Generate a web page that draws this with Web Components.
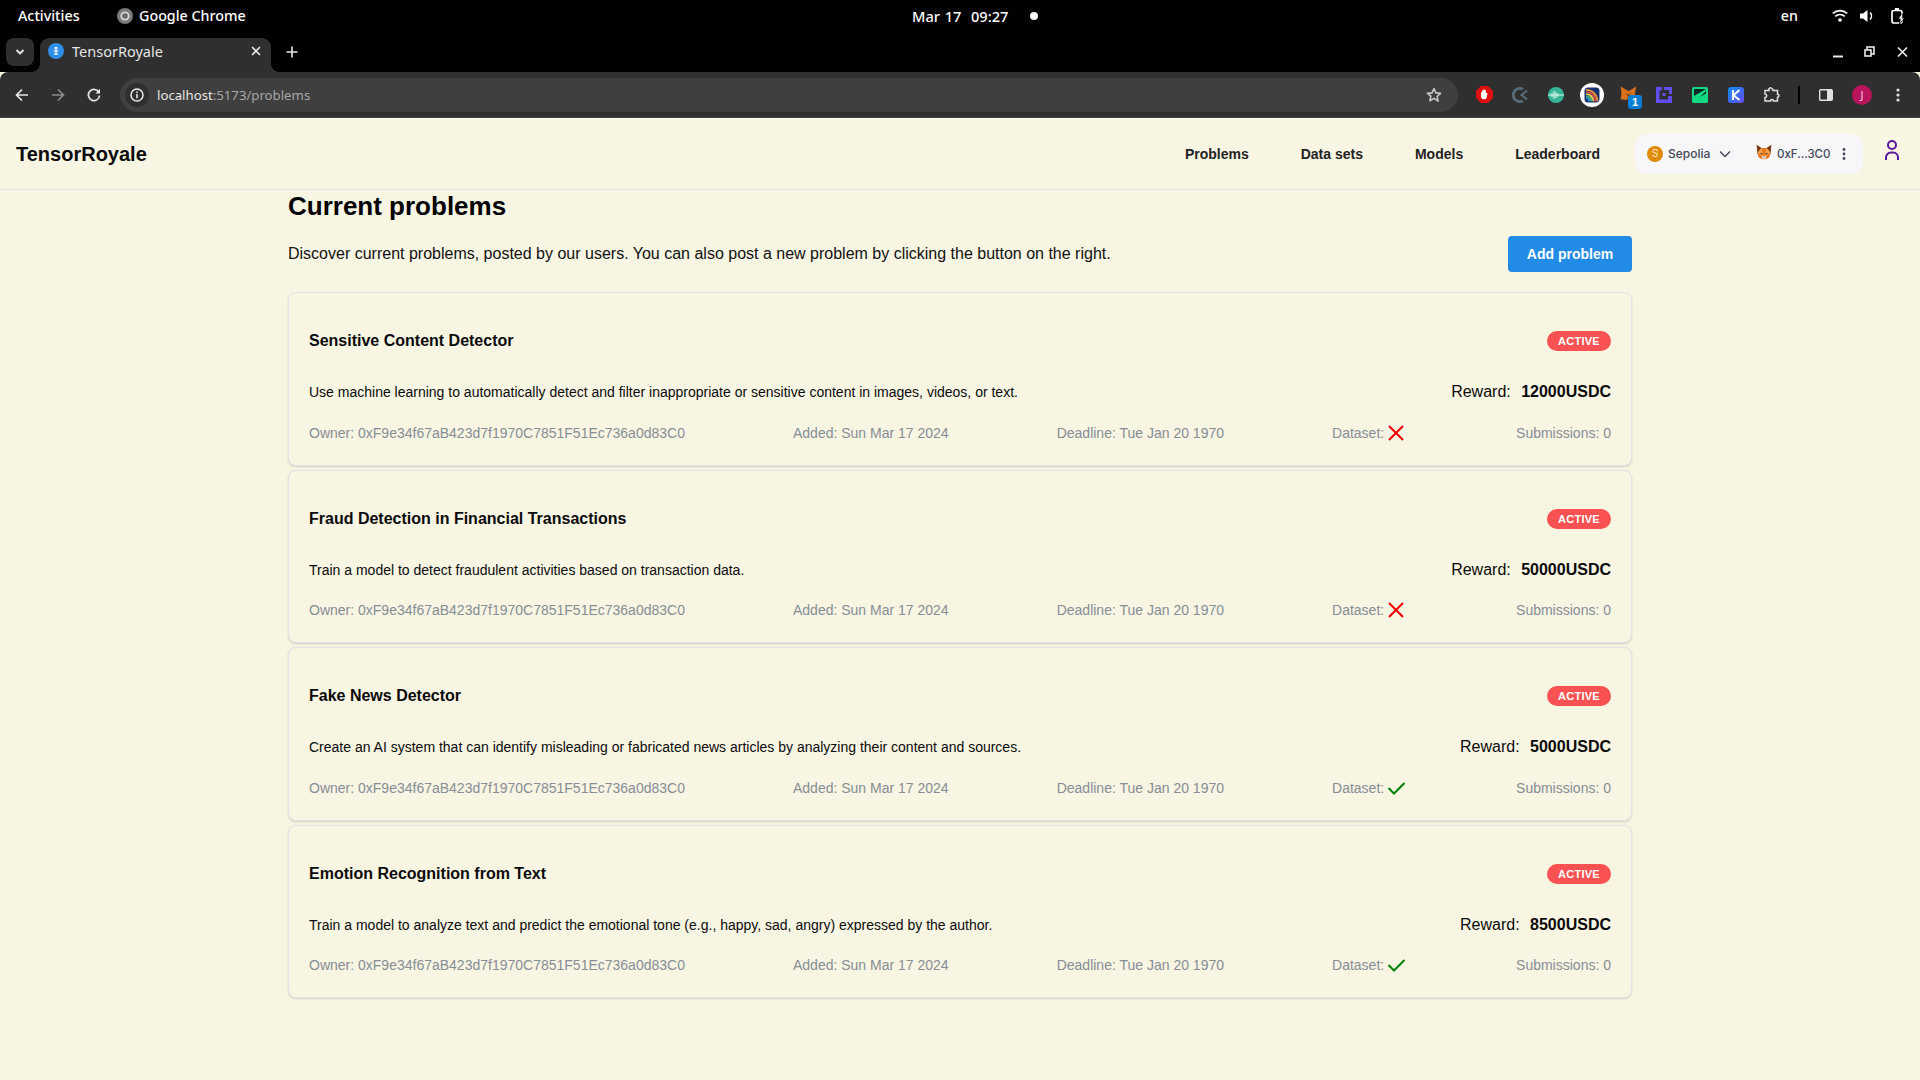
<!DOCTYPE html>
<html lang="en"><head><meta charset="utf-8"><title>TensorRoyale</title>
<style>
html,body{margin:0;padding:0;height:100%;overflow:hidden;background:#f8f5e3;font-family:"Liberation Sans",Arial,sans-serif}
browser-shell{height:100vh}
</style></head><body>
<browser-shell>
  <os-top-bar></os-top-bar>
  <browser-tabs></browser-tabs>
  <browser-toolbar></browser-toolbar>
  <app-header></app-header>
  <problems-page>
    <problem-card dataset="no" reward="12000USDC">
      <span slot="title">Sensitive Content Detector</span>
      <span slot="desc">Use machine learning to automatically detect and filter inappropriate or sensitive content in images, videos, or text.</span>
    </problem-card>
    <problem-card dataset="no" reward="50000USDC">
      <span slot="title">Fraud Detection in Financial Transactions</span>
      <span slot="desc">Train a model to detect fraudulent activities based on transaction data.</span>
    </problem-card>
    <problem-card dataset="yes" reward="5000USDC">
      <span slot="title">Fake News Detector</span>
      <span slot="desc">Create an AI system that can identify misleading or fabricated news articles by analyzing their content and sources.</span>
    </problem-card>
    <problem-card dataset="yes" reward="8500USDC">
      <span slot="title">Emotion Recognition from Text</span>
      <span slot="desc">Train a model to analyze text and predict the emotional tone (e.g., happy, sad, angry) expressed by the author.</span>
    </problem-card>
  </problems-page>
</browser-shell>
<script>
function def(name, html){
  customElements.define(name, class extends HTMLElement{
    connectedCallback(){
      if(this.shadowRoot) return;
      const r=this.attachShadow({mode:'open'});
      r.innerHTML = typeof html==='function'? html(this): html;
    }
  });
}
const FOX=`<svg width="16" height="16" viewBox="0 0 24 24"><path fill="#763d16" d="M1 1l9 6-2 5-6 3zM23 1l-9 6 2 5 6 3z"/><path fill="#e2761b" d="M2 13l6-7h8l6 7-2 7-5 3H9l-5-3z"/><path fill="#f6a04d" d="M2 13l6-7 2 6-3 4zM22 13l-6-7-2 6 3 4z"/><path fill="#efe0d0" d="M8 17l4 1 4-1-2 6h-4z"/><path fill="#233447" d="M6.500 13l3 1-2 1.500zM17.500 13l-3 1 2 1.500zM10.500 19h3l-1.500 1.500z"/></svg>`;

def('browser-shell',`<style>:host{display:flex;flex-direction:column;height:100vh;overflow:hidden}</style><slot></slot>`);

def('os-top-bar',`<style>
:host{display:flex;align-items:center;height:36px;flex:none;background:#000;color:#fff;font:500 14.300px "Noto Sans","Open Sans",sans-serif;position:relative;padding:0 15px 5px 18px;box-sizing:border-box}
.act{width:99px}
.app{display:flex;align-items:center;gap:6px}
.clock{position:absolute;left:912px;top:0;height:31px;display:flex;align-items:center;white-space:pre;font-size:14.600px;word-spacing:1px}
.dot{position:absolute;left:1029.500px;top:12px;width:8px;height:8px;border-radius:50%;background:#fff}
.right{margin-left:auto;display:flex;align-items:center}
.en{margin-right:34px}
svg{display:block}
</style>
<span class="act">Activities</span>
<span class="app"><svg width="16" height="16" viewBox="0 0 16 16"><circle cx="8" cy="8" r="8" fill="#7a7a7a"/><circle cx="8" cy="8" r="4.600" fill="#d8d8d8"/><circle cx="8" cy="8" r="2.800" fill="#666"/></svg>Google Chrome</span>
<span class="clock">Mar 17  09:27</span><span class="dot"></span>
<span class="right"><span class="en">en</span>
<svg width="16" height="14" viewBox="0 0 16 14" style="margin-right:12px"><g fill="none" stroke="#fff" stroke-width="1.700"><path d="M.8 4.500a10.500 10.500 0 0 1 14.400 0"/><path d="M3.300 7.300a7 7 0 0 1 9.400 0"/></g><circle cx="8" cy="11" r="1.800" fill="#fff"/></svg>
<svg width="14" height="14" viewBox="0 0 14 14" style="margin-right:17px"><path fill="#fff" d="M0 4.500h3L7.500 1v12L3 9.500H0z"/><path fill="none" stroke="#fff" stroke-width="1.600" d="M10 3.500a5 5 0 0 1 0 7"/></svg>
<svg width="14" height="16" viewBox="0 0 14 16"><rect x="1" y="2.500" width="10" height="12.500" rx="2" fill="none" stroke="#fff" stroke-width="1.700"/><rect x="4" y="0" width="4" height="2.500" fill="#fff"/><path fill="#fff" d="M10.500 6L7 11h2.300L8.500 16l5-6h-2.500l1-4z" stroke="#000" stroke-width=".8"/></svg>
</span>`);

def('browser-tabs',`<style>
:host{display:flex;align-items:flex-start;height:36px;flex:none;background:#000;position:relative;color:#e6e6e6;font:400 14.500px "Noto Sans","Open Sans",sans-serif}
.list{width:28px;height:28px;margin:2px 0 0 6px;border-radius:8px;background:#2f2f2f;display:flex;align-items:center;justify-content:center}
.tab{position:relative;margin:2px 0 0 6px;width:231px;height:34px;background:#2f2f2f;border-radius:9px 9px 0 0;display:flex;align-items:center;padding:0 10px 8px 8px;box-sizing:border-box}
.tab:before,.tab:after{content:"";position:absolute;bottom:0;width:8px;height:8px}
.tab:before{left:-8px;background:radial-gradient(circle at 0 0,#000 7.500px,#2f2f2f 8px)}
.tab:after{right:-8px;background:radial-gradient(circle at 100% 0,#000 7.500px,#2f2f2f 8px)}
.name{margin-left:8px;flex:1}
.plus{margin:10px 0 0 15px}
.win{margin-left:auto;display:flex;gap:22px;margin-top:10px;margin-right:12px}
svg{display:block;flex:none}
</style>
<div class="list"><svg width="10" height="8" viewBox="0 0 10 8"><path d="M1.500 2L5 5.500 8.500 2" fill="none" stroke="#e8e8e8" stroke-width="1.800"/></svg></div>
<div class="tab"><svg width="16" height="16" viewBox="0 0 16 16"><circle cx="8" cy="8" r="8" fill="#2d8fe6"/><path d="M6 5h4M5.500 8h5M6 11h4M8 4v8" stroke="#fff" stroke-width="1.200"/></svg><span class="name">TensorRoyale</span>
<svg width="10" height="10" viewBox="0 0 10 10"><path d="M1 1l8 8M9 1L1 9" stroke="#e8e8e8" stroke-width="1.600"/></svg></div>
<svg class="plus" width="12" height="12" viewBox="0 0 12 12"><path d="M6 .5v11M.5 6h11" stroke="#e8e8e8" stroke-width="1.600"/></svg>
<div class="win">
<svg width="11" height="12" viewBox="0 0 11 12" style="margin-right:-1px"><rect x="1" y="9.500" width="10" height="2" fill="#e8e8e8"/></svg>
<svg width="11" height="12" viewBox="0 0 11 12"><rect x="3" y="1" width="7" height="7" fill="none" stroke="#e8e8e8" stroke-width="1.600"/><rect x="1" y="4" width="6" height="6" fill="#000" stroke="#e8e8e8" stroke-width="1.600"/></svg>
<svg width="11" height="12" viewBox="0 0 11 12"><path d="M1 1.500l9 9M10 1.500l-9 9" stroke="#e8e8e8" stroke-width="1.700"/></svg>
</div>`);

def('browser-toolbar',`<style>
:host{display:flex;align-items:center;height:46px;flex:none;background:#2f2f2f;border-radius:8px 8px 0 0;box-sizing:border-box;border-bottom:1px solid #454545;font:400 13.200px "Noto Sans","Open Sans",sans-serif;color:#e6e6e6}
.nav{width:36px;display:flex;justify-content:center;flex:none}
.navs{display:flex;margin-left:4px}
.omni{margin-left:8px;width:1338px;height:34px;border-radius:17px;background:#3f3f3f;display:flex;align-items:center;flex:none;box-sizing:border-box;padding:0 16px 0 5px}
.chip{width:24px;height:24px;border-radius:50%;background:#2f2f2f;display:flex;align-items:center;justify-content:center;flex:none}
.url{margin-left:8px;flex:1;color:#e8e8e8}
.url i{font-style:normal;color:#a6a6a6}
.ext{display:flex;align-items:center;margin-left:8px}
.e{width:36px;height:36px;display:flex;align-items:center;justify-content:center;position:relative;flex:none}
.sep{width:2px;height:18px;background:#000;margin:0 8px;flex:none}
.badge{position:absolute;right:4px;bottom:4px;width:14px;height:14px;background:#0b7fd6;border-radius:3px;color:#fff;font:700 11px "Liberation Sans",sans-serif;text-align:center;line-height:14px}
.ava{width:20px;height:20px;border-radius:50%;background:#b9145c;color:#f4d0e0;font:400 11px "Noto Sans",sans-serif;display:flex;align-items:center;justify-content:center}
.fx{position:relative;left:0;top:-1px}
svg{display:block}
</style>
<div class="navs">
<div class="nav"><svg width="14" height="14" viewBox="0 0 14 14"><path d="M13 7H2M7 1.500L1.500 7 7 12.500" fill="none" stroke="#e8e8e8" stroke-width="1.700"/></svg></div>
<div class="nav"><svg width="14" height="14" viewBox="0 0 14 14"><path d="M1 7h11M7 1.500L12.500 7 7 12.500" fill="none" stroke="#8a8a8a" stroke-width="1.700"/></svg></div>
<div class="nav"><svg width="14" height="14" viewBox="0 0 14 14"><path d="M12 4.500A5.600 5.600 0 1 0 12.600 7.500" fill="none" stroke="#e8e8e8" stroke-width="1.700"/><path d="M13 .8v4.600H8.400z" fill="#e8e8e8"/></svg></div>
</div>
<div class="omni"><span class="chip"><svg width="14" height="14" viewBox="0 0 14 14"><circle cx="7" cy="7" r="6" fill="none" stroke="#e8e8e8" stroke-width="1.500"/><path d="M7 6v4.200M7 3.500v1.400" stroke="#e8e8e8" stroke-width="1.600"/></svg></span>
<span class="url">localhost<i>:5173/problems</i></span>
<svg width="16" height="16" viewBox="0 0 24 24"><path d="M12 2.500l2.900 6.300 6.900.8-5.100 4.700 1.400 6.800L12 17.100l-6.100 3.500 1.400-6.800L2.200 9.600l6.900-.8z" fill="none" stroke="#c8c8c8" stroke-width="2.400" stroke-linejoin="round"/></svg></div>
<div class="ext">
<span class="e"><svg width="17" height="17" viewBox="0 0 17 17"><path fill="#e01010" d="M5 0h7l5 5v7l-5 5H5l-5-5V5z"/><path fill="#fff" d="M5 6.500c0-.8 1.200-.8 1.200 0V4.500c0-.8 1.200-.8 1.200 0V3.800c0-.8 1.300-.8 1.300 0v.7c0-.8 1.200-.8 1.200 0v3c.6-1 1.900-.8 1.600.2L10.500 12c-.4 1-1 1.300-2.200 1.300C6 13.300 5 12 5 10.500z"/></svg></span>
<span class="e"><svg width="18" height="18" viewBox="0 0 18 18"><path d="M12 3.200A6.600 6.600 0 1 0 12 14.800" fill="none" stroke="#566e7c" stroke-width="2.600"/><path d="M16 4.500L10.500 9l5.500 4.500" fill="none" stroke="#566e7c" stroke-width="2"/></svg></span>
<span class="e"><svg width="16" height="16" viewBox="0 0 16 16"><circle cx="8" cy="8" r="8" fill="#36b596"/><path d="M0 8h16M4 6v4M6 4v8M8 5v6M10 6.500v3" stroke="#d3f3ea" stroke-width="1.200"/></svg></span>
<span class="e"><svg width="24" height="24" viewBox="0 0 24 24"><circle cx="12" cy="12" r="12" fill="#fff"/><rect x="4.500" y="4.500" width="15" height="15" rx="3.500" fill="#17306e"/><g fill="none" stroke-width="1.700"><path d="M6 9a9 9 0 0 1 9.500 9.500" stroke="#e8494f"/><path d="M6 6.800a11.500 11.500 0 0 1 11.500 11.500" stroke="#f29a2e"/><path d="M6 11a7 7 0 0 1 7.300 7.300" stroke="#f5d842"/><path d="M6 13a5 5 0 0 1 5.300 5.300" stroke="#4dc36a"/><path d="M6 15a3 3 0 0 1 3.300 3.300" stroke="#37a1e8"/></g></svg></span>
<span class="e"><svg class="fx" width="17" height="17" viewBox="0 0 24 24"><path fill="#d9701c" d="M1 2l10 6h2l10-6-2 10 2 8-8 1-3-3-3 3-8-1 1-8z"/><path fill="#8a4a12" d="M8 11l4 2 4-2-4 7z"/></svg><span class="badge">1</span></span>
<span class="e"><svg width="16" height="16" viewBox="0 0 16 16"><path fill="#5f4ef0" d="M0 0h6v3.500H3.500v9H12V9h4v7H0zM8 0h8v7h-3V3H8z"/><rect x="6.500" y="6" width="3" height="3" fill="#5f4ef0"/></svg></span>
<span class="e"><svg width="16" height="16" viewBox="0 0 16 16"><rect width="16" height="16" rx="1.500" fill="#12d884"/><path fill="#0b2b26" d="M2 2h12L2 9zM14 4v2.500L8 10z"/></svg></span>
<span class="e"><svg width="16" height="16" viewBox="0 0 16 16"><defs><linearGradient id="k" x1="0" y1="0" x2="1" y2="1"><stop offset="0" stop-color="#0e8cf0"/><stop offset="1" stop-color="#6a4cf0"/></linearGradient></defs><rect width="16" height="16" rx="3" fill="url(#k)"/><path d="M5 3v10M11.500 3L5.500 8.300 11.500 13" fill="none" stroke="#fff" stroke-width="2"/></svg></span>
<span class="e"><svg width="16" height="16" viewBox="0 0 16 16"><path d="M1 3.500h4a1.500 1.500 0 0 1 3-1.800 1.500 1.500 0 0 1 1 1.800h4.500v3.700a1.500 1.500 0 0 1 0 3V14H9.500a1.500 1.500 0 0 0-3 0H1v-3.500a1.500 1.500 0 0 0 0-3.500z" fill="none" stroke="#e0e0e0" stroke-width="1.500"/></svg></span>
<span class="sep"></span>
<span class="e"><svg width="14" height="12" viewBox="0 0 14 12"><rect x=".7" y=".7" width="12.600" height="10.600" rx="1" fill="none" stroke="#e0e0e0" stroke-width="1.400"/><rect x="8" y="1" width="5" height="10" fill="#e0e0e0"/></svg></span>
<span class="e"><span class="ava">J</span></span>
<span class="e"><svg width="4" height="14" viewBox="0 0 4 14"><g fill="#e0e0e0"><circle cx="2" cy="2" r="1.600"/><circle cx="2" cy="7" r="1.600"/><circle cx="2" cy="12" r="1.600"/></g></svg></span>
</div>`);

def('app-header',`<style>
:host{display:flex;align-items:center;height:72px;flex:none;box-sizing:border-box;border-bottom:1px solid #dfe3e6;padding:0 19px 0 16px;background:#f8f5e3}
.brand{font-weight:700;font-size:20px;color:#0b0b0b;position:relative;top:1px}
nav{margin-left:auto;display:flex;gap:52px;font-weight:700;font-size:14px;color:#232323}
.wallet{margin-left:35px;width:228px;flex:none;height:40px;border-radius:12px;background:#f7f7fa;display:flex;align-items:center;box-sizing:border-box;padding-left:12px;color:#424656;font:500 11.500px Inter,"Noto Sans",sans-serif}
.coin{width:16px;height:16px;border-radius:50%;background:#e08a00;color:#fbe6c0;font:400 10.500px Inter,sans-serif;display:flex;align-items:center;justify-content:center;flex:none}
.net{margin-left:5px;width:43px;font-size:12px}
.chev{margin-left:8px;display:block}
.addr{margin-left:5px;white-space:nowrap;width:52px}
.more{margin-left:13px;display:block}
.user{margin-left:20px;display:block;margin-top:-7px;flex:none}
.fox{margin-left:25px;display:block}
</style>
<span class="brand">TensorRoyale</span>
<nav><span>Problems</span><span>Data sets</span><span>Models</span><span>Leaderboard</span></nav>
<div class="wallet"><span class="coin">S</span><span class="net">Sepolia</span>
<svg class="chev" width="12" height="8" viewBox="0 0 12 8"><path d="M1 1.500L6 6.500l5-5" fill="none" stroke="#424656" stroke-width="1.400"/></svg>
<span class="fox">${FOX}</span><span class="addr">0xF...3C0</span>
<svg class="more" width="4" height="12" viewBox="0 0 4 12"><g fill="#424656"><circle cx="2" cy="1.500" r="1.400"/><circle cx="2" cy="6" r="1.400"/><circle cx="2" cy="10.500" r="1.400"/></g></svg></div>
<svg class="user" width="18" height="22" viewBox="0 0 18 22"><circle cx="9" cy="6" r="4" fill="none" stroke="#5a189a" stroke-width="2"/><path d="M3 21v-2.500a5 5 0 0 1 5-5h2a5 5 0 0 1 5 5V21" fill="none" stroke="#5a189a" stroke-width="2"/></svg>`);

def('status-badge',`<style>:host{display:inline-flex;align-items:center;justify-content:center;height:20px;width:64px;border-radius:10px;background:#fa5252;color:#fff;font:700 11px "Liberation Sans",sans-serif;letter-spacing:.25px}</style><slot></slot>`);

def('problems-page',`<style>
:host{display:block;flex:1;padding:0 288px;overflow:hidden}
h2{margin:-1px 0 0;font-size:26px;line-height:34px;font-weight:700;color:#000}
.intro{display:flex;align-items:center;justify-content:space-between;margin:13px 0 20px;font-size:16px;color:#111}
button{width:124px;height:36px;border:0;border-radius:4px;background:#228be6;color:#fff;font:700 14px "Liberation Sans",sans-serif;padding:0}
.list{display:flex;flex-direction:column;gap:4px}
</style>
<h2>Current problems</h2>
<div class="intro"><span>Discover current problems, posted by our users. You can also post a new problem by clicking the button on the right.</span><button>Add problem</button></div>
<div class="list"><slot></slot></div>`);

def('problem-card',(h)=>{
  const ok=h.getAttribute('dataset')==='yes';
  const ic= ok
   ? `<svg width="24" height="24" viewBox="0 0 24 24"><path d="M4.500 12l5.500 5.500L20.500 7" fill="none" stroke="#008000" stroke-width="2"/></svg>`
   : `<svg width="24" height="24" viewBox="0 0 24 24"><path d="M19 5L5 19M5 5l14 14" fill="none" stroke="#f00000" stroke-width="2"/></svg>`;
  return `<style>
:host{display:block;height:173.600px;box-sizing:border-box;border:1px solid #dfe3e6;border-radius:8px;padding:0 20px;box-shadow:0 1px 3px rgba(0,0,0,.05),0 1px 2px rgba(0,0,0,.1);background:#f8f5e3}
.top,.mid,.meta{display:flex;justify-content:space-between;align-items:center}
.top{margin-top:36px;height:24px;font-size:16px;font-weight:700;color:#0b0b0b}
.mid{margin-top:27px;height:24px;font-size:14px;color:#0b0b0b}
.rew{font-size:16px}.rew b{margin-left:6px}
.meta{margin-top:16.600px;height:24px;font-size:14px;color:#868e96}
.ds{display:flex;align-items:center;width:76px;flex:none}
svg{display:block;flex:none}
</style>
<div class="top"><slot name="title"></slot><status-badge>ACTIVE</status-badge></div>
<div class="mid"><slot name="desc"></slot><span class="rew">Reward: <b>${h.getAttribute('reward')}</b></span></div>
<div class="meta"><span>Owner: 0xF9e34f67aB423d7f1970C7851F51Ec736a0d83C0</span><span>Added: Sun Mar 17 2024</span><span>Deadline: Tue Jan 20 1970</span><span class="ds">Dataset:${ic}</span><span>Submissions: 0</span></div>`;
});
</script>
</body></html>
